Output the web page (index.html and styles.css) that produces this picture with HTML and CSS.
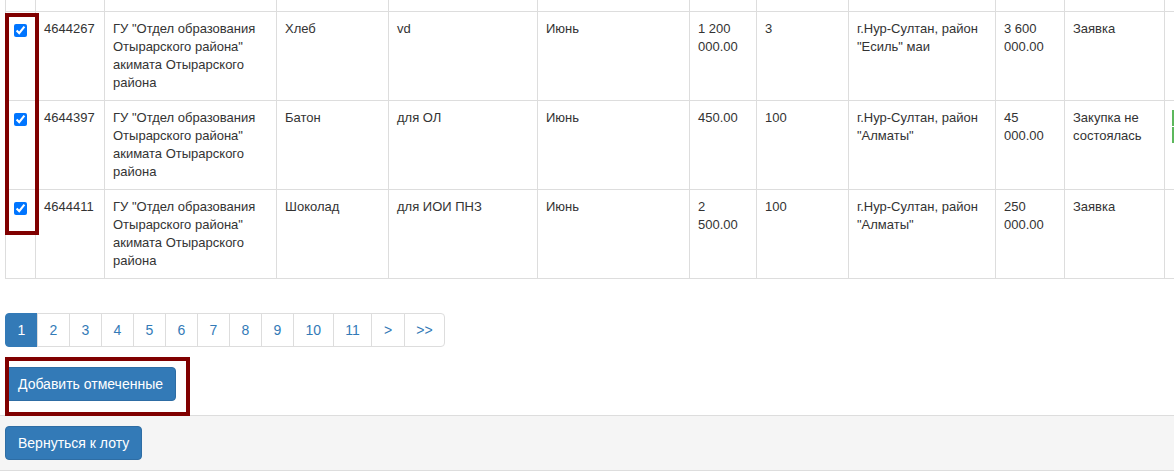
FILE: index.html
```html
<!DOCTYPE html>
<html lang="ru">
<head>
<meta charset="utf-8">
<title>Лоты</title>
<link rel="stylesheet" href="styles.css">
</head>
<body>
<div class="content">
  <div class="table-wrap">
    <table class="grid">
      <colgroup>
        <col class="c-chk"><col class="c-id"><col class="c-org"><col class="c-name"><col class="c-desc"><col class="c-month"><col class="c-price"><col class="c-qty"><col class="c-place"><col class="c-sum"><col class="c-status"><col class="c-act">
      </colgroup>
      <tbody>
        <tr class="cut">
          <td></td><td></td><td></td><td></td><td></td><td></td><td></td><td></td><td></td><td></td><td></td><td></td>
        </tr>
        <tr>
          <td><input type="checkbox" class="chk" checked></td>
          <td>4644267</td>
          <td>ГУ "Отдел образования Отырарского района" акимата Отырарского района</td>
          <td>Хлеб</td>
          <td>vd</td>
          <td>Июнь</td>
          <td>1 200 000.00</td>
          <td>3</td>
          <td>г.Нур-Султан, район "Есиль" маи</td>
          <td>3 600 000.00</td>
          <td>Заявка</td>
          <td></td>
        </tr>
        <tr>
          <td><input type="checkbox" class="chk" checked></td>
          <td>4644397</td>
          <td>ГУ "Отдел образования Отырарского района" акимата Отырарского района</td>
          <td>Батон</td>
          <td>для ОЛ</td>
          <td>Июнь</td>
          <td>450.00</td>
          <td>100</td>
          <td>г.Нур-Султан, район "Алматы"</td>
          <td>45 000.00</td>
          <td>Закупка не состоялась</td>
          <td><span class="green-mark"></span><span class="green-mark"></span></td>
        </tr>
        <tr>
          <td><input type="checkbox" class="chk" checked></td>
          <td>4644411</td>
          <td>ГУ "Отдел образования Отырарского района" акимата Отырарского района</td>
          <td>Шоколад</td>
          <td>для ИОИ ПНЗ</td>
          <td>Июнь</td>
          <td>2 500.00</td>
          <td>100</td>
          <td>г.Нур-Султан, район "Алматы"</td>
          <td>250 000.00</td>
          <td>Заявка</td>
          <td></td>
        </tr>
      </tbody>
    </table>
  </div>

  <ul class="pagination">
    <li class="active"><a href="#">1</a></li>
    <li><a href="#">2</a></li>
    <li><a href="#">3</a></li>
    <li><a href="#">4</a></li>
    <li><a href="#">5</a></li>
    <li><a href="#">6</a></li>
    <li><a href="#">7</a></li>
    <li><a href="#">8</a></li>
    <li><a href="#">9</a></li>
    <li><a href="#">10</a></li>
    <li><a href="#">11</a></li>
    <li><a href="#">&gt;</a></li>
    <li><a href="#">&gt;&gt;</a></li>
  </ul>

  <div class="actions">
    <button class="btn">Добавить отмеченные</button>
  </div>
</div>

<div class="footer">
  <button class="btn">Вернуться к лоту</button>
</div>

<div class="mark mark-checks"></div>
<div class="mark mark-button"></div>
</body>
</html>
```

FILE: styles.css
```css
html, body {
  margin: 0;
  padding: 0;
  background: #fff;
  overflow: hidden;
}

body {
  position: relative;
  font-family: "Liberation Sans", Arial, sans-serif;
  color: #333;
  font-size: 14px;
  line-height: 20px;
}

.content {
  padding: 0 0 14px 5px;
}

.table-wrap {
  overflow: hidden;
}

.grid {
  border-collapse: collapse;
  table-layout: fixed;
  width: 1260px;
  font-size: 13px;
  line-height: 18px;
}

.c-chk { width: 30px; }
.c-id { width: 69px; }
.c-org { width: 172px; }
.c-name { width: 112px; }
.c-desc { width: 149px; }
.c-month { width: 152px; }
.c-price { width: 67px; }
.c-qty { width: 92px; }
.c-place { width: 147px; }
.c-sum { width: 69px; }
.c-status { width: 100px; }
.c-act { width: 100px; }

.grid td {
  border: 1px solid #ddd;
  padding: 8px;
  vertical-align: top;
  text-align: left;
}

.grid tr.cut td {
  border-top: 0;
  padding: 0;
  height: 11px;
}

.chk {
  width: 13px;
  height: 13px;
  margin: 4px 0 0 0;
  display: block;
}

.green-mark {
  display: block;
  width: 2px;
  height: 16px;
  margin: 1px 0 1px -1px;
  background: #5cb85c;
}

.pagination {
  display: flex;
  list-style: none;
  margin: 34px 0 20px 0;
  padding: 0;
}

.pagination li a {
  display: block;
  padding: 6px 11.6px;
  line-height: 20px;
  font-size: 14px;
  color: #337ab7;
  text-decoration: none;
  background: #fff;
  border: 1px solid #ddd;
  margin-left: -1px;
}

.pagination li:first-child a {
  margin-left: 0;
  border-radius: 4px 0 0 4px;
}

.pagination li:last-child a {
  border-radius: 0 4px 4px 0;
}

.pagination li.active a {
  background: #337ab7;
  border-color: #337ab7;
  color: #fff;
}

.actions {
  display: flex;
}

.btn {
  font-family: "Liberation Sans", Arial, sans-serif;
  font-size: 14px;
  line-height: 20px;
  padding: 6px 12px;
  color: #fff;
  background: #337ab7;
  border: 1px solid #2e6da4;
  border-radius: 4px;
  cursor: pointer;
}

.footer {
  display: flex;
  background: #f5f5f5;
  border-top: 1px solid #ddd;
  border-bottom: 1px solid #ddd;
  padding: 10px 5px;
}

.mark {
  position: absolute;
  box-sizing: border-box;
  border: 4px solid #800000;
}

.mark-checks {
  left: 5px;
  top: 13px;
  width: 34px;
  height: 222px;
}

.mark-button {
  left: 5px;
  top: 357px;
  width: 185px;
  height: 59px;
}
```
